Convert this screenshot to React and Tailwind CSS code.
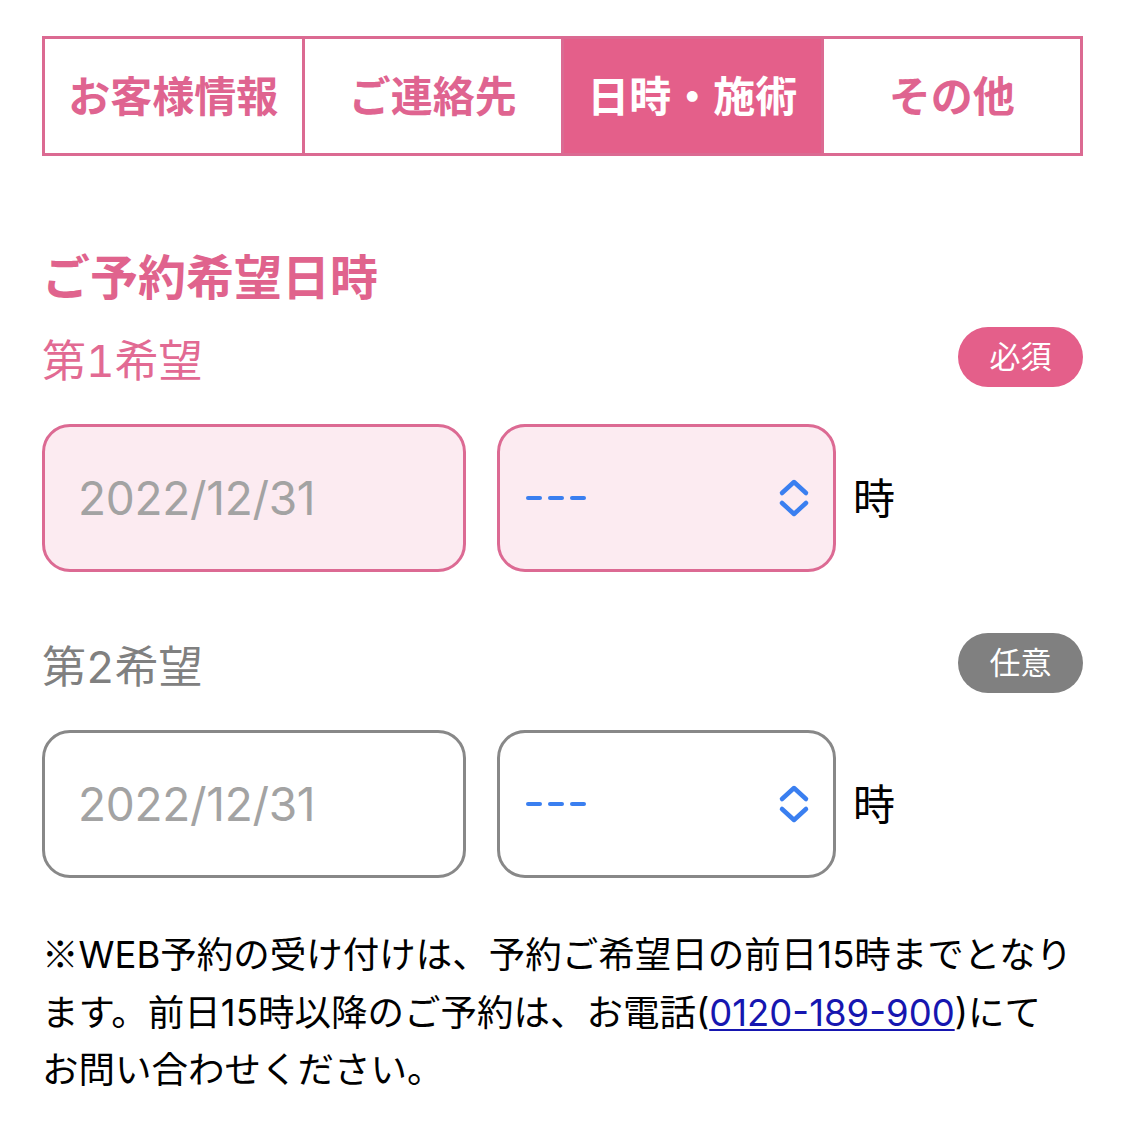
import React from "react";

const tabs = ["お客様情報", "ご連絡先", "日時・施術", "その他"];

const Chevrons = () => (
  <svg width="34" height="40" viewBox="0 0 34 40" fill="none">
    <path
      d="M5 15 L17 4 L29 15"
      stroke="#3a7ff0"
      strokeWidth="4.5"
      strokeLinecap="round"
      strokeLinejoin="round"
    />
    <path
      d="M5 25 L17 36 L29 25"
      stroke="#3a7ff0"
      strokeWidth="4.5"
      strokeLinecap="round"
      strokeLinejoin="round"
    />
  </svg>
);

const Choice = ({ label, badge, required }) => (
  <>
    <div className="flex h-[60px] items-center justify-between">
      <span
        className={
          "pt-[8px] text-[44px] leading-none tabular-nums " +
          (required ? "text-[#e26a93]" : "text-[#808080]")
        }
      >
        {label}
      </span>
      <span
        className={
          "flex h-[60px] w-[125px] items-center justify-center rounded-full text-[31px] text-white " +
          (required ? "bg-[#e45f8a]" : "bg-[#808080]")
        }
      >
        {badge}
      </span>
    </div>
    <div className="mt-[37px] flex h-[148px] items-center">
      <div
        className={
          "flex h-full w-[424px] items-center rounded-[28px] border-[3px] pl-[33px] " +
          (required
            ? "border-[#dc6a93] bg-[#fcebf1]"
            : "border-[#888888] bg-white")
        }
      >
        <span className="text-[46px] tracking-[-0.3px] text-[#a3a3a3]">
          2022/12/31
        </span>
      </div>
      <div
        className={
          "ml-[31px] flex h-full w-[339px] items-center justify-between rounded-[28px] border-[3px] pl-[26px] pr-[22px] " +
          (required
            ? "border-[#dc6a93] bg-[#fcebf1]"
            : "border-[#888888] bg-white")
        }
      >
        <span className="flex gap-[6px]">
          <span className="h-[4px] w-[16px] rounded-sm bg-[#3a7ff0]" />
          <span className="h-[4px] w-[16px] rounded-sm bg-[#3a7ff0]" />
          <span className="h-[4px] w-[16px] rounded-sm bg-[#3a7ff0]" />
        </span>
        <Chevrons />
      </div>
      <span className="ml-[17px] text-[42px] text-black">時</span>
    </div>
  </>
);

export default function App() {
  return (
    <div className="min-h-screen bg-white px-[42px] pt-[36px] font-['Inter','Noto_Sans_CJK_JP',sans-serif]">
      <div className="flex h-[120px] border-[3px] border-[#db6a92]">
        {tabs.map((t, i) => (
          <div
            key={t}
            className={
              "flex flex-1 items-center justify-center text-[42px] font-bold " +
              (i > 0 ? "border-l-[3px] border-[#db6a92] " : "") +
              (i === 2 ? "bg-[#e45f8a] text-white" : "text-[#df6490]")
            }
          >
            {t}
          </div>
        ))}
      </div>

      <h2 className="mt-[92px] h-[60px] text-[48px] font-bold leading-[60px] text-[#e0638d]">
        ご予約希望日時
      </h2>

      <div className="mt-[19px]">
        <Choice label="第1希望" badge="必須" required />
      </div>
      <div className="mt-[61px]">
        <Choice label="第2希望" badge="任意" />
      </div>

      <p className="mt-[46px] whitespace-nowrap text-[36.5px] leading-[57.5px] text-black">
        <span className="font-['Noto_Sans_CJK_JP',sans-serif]">※</span>
        WEB予約の受け付けは、予約ご希望日の前日15時までとなり
        <br />
        ます。前日15時以降のご予約は、お電話(
        <a
          href="#"
          className="text-[#1616b0] underline decoration-2 underline-offset-[3px]"
        >
          0120-189-900
        </a>
        )にて
        <br />
        お問い合わせください。
      </p>
    </div>
  );
}
